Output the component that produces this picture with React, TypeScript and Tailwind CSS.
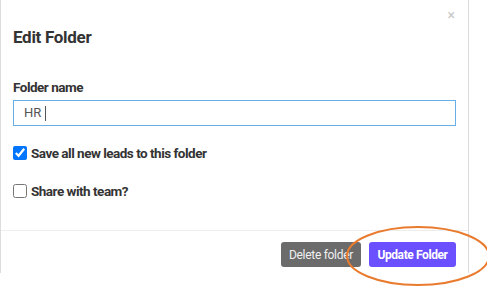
export default function App() {
  return (
    <div className="relative w-[487px] h-[287px] bg-white overflow-hidden font-['Roboto',sans-serif] text-[#333]">
      {/* Modal */}
      <div className="w-[469px] h-[273px] border-l border-r border-[#dcdcdc] bg-white flex flex-col">
        {/* Header */}
        <div className="px-3 pt-[8px]">
          <div className="flex justify-end h-[14px]">
            <span className="text-[14px] leading-[14px] text-[#c8c8c8] pr-[1px]">×</span>
          </div>
          <h2 className="mt-[5px] text-[17px] leading-[20px] font-bold tracking-[-0.3px]">Edit Folder</h2>
        </div>

        {/* Body */}
        <div className="px-3">
          <div className="mt-[32px] text-[13.5px] leading-[16px] font-bold tracking-[-0.5px]">Folder name</div>
          <div className="mt-[5px] h-[26px] border border-[#66afe9] flex items-center pl-[10px] text-[13px] text-[#555]">
            HR
            <span className="inline-block w-px h-[15px] bg-[#555] ml-[4px]"></span>
          </div>

          <label className="mt-[17px] h-[20px] flex items-center gap-[4px] text-[13.5px] font-bold tracking-[-0.5px]">
            <input type="checkbox" defaultChecked className="w-[14px] h-[14px] m-0" />
            Save all new leads to this folder
          </label>
          <label className="mt-[18px] h-[20px] flex items-center gap-[4px] text-[13.5px] font-bold tracking-[-0.5px]">
            <input type="checkbox" className="w-[14px] h-[14px] m-0" />
            Share with team?
          </label>
        </div>

        {/* Footer */}
        <div className="mt-[29px] border-t border-[#eee] pt-[11px] px-3 flex justify-end gap-2">
          <button className="w-[80px] h-[25px] rounded-[3px] bg-[#6b6b6b] text-[#f0f0f0] text-[12px] tracking-[-0.3px]">
            Delete folder
          </button>
          <button className="w-[87px] h-[25px] rounded-[3px] bg-[#6a50ff] text-white text-[12px] font-bold tracking-[-0.4px]">
            Update Folder
          </button>
        </div>
      </div>

      {/* Annotation */}
      <svg className="absolute left-0 top-0 pointer-events-none" width="487" height="287">
        <ellipse cx="418" cy="256" rx="71" ry="29" fill="none" stroke="#e97b2f" strokeWidth="2" />
      </svg>
    </div>
  );
}
